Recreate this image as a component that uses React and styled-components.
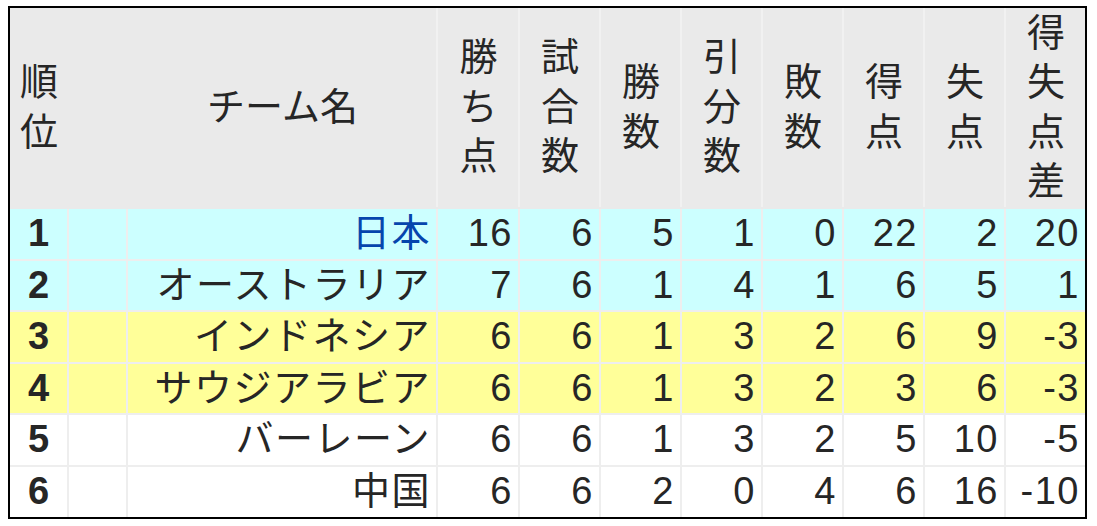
import React from "react";
import styled, { createGlobalStyle } from "styled-components";

const GlobalStyle = createGlobalStyle`
  body {
    margin: 0;
    background: #fff;
    font-family: "Liberation Sans", "Noto Sans CJK JP", sans-serif;
  }
`;

const Page = styled.div`
  padding: 6px 0 0 8px;
`;

// black frame round the whole standings table
const Frame = styled.div`
  width: 1075px;
  border: 2px solid #000;
`;

const Table = styled.table`
  width: 100%;
  table-layout: fixed;
  border-collapse: collapse;
  border-style: hidden;
  font-size: 38px;
  letter-spacing: 1.5px;
  color: #262626;
`;

const HeadCell = styled.th`
  height: 199px;
  padding: 0 0 0 1px;
  font-weight: normal;
  letter-spacing: 0;
  line-height: 49.5px;
  text-align: center;
  vertical-align: middle;
  background: #eaeaea;
  border: 2px solid #f1f1f1;
  border-bottom-color: #eaeaea;
  border-right-color: ${p => (p.$seamless ? "#eaeaea" : "#f1f1f1")};
`;

const Row = styled.tr`
  background: ${p => p.$bg || "#fff"};
`;

const Cell = styled.td`
  height: 49.6px;
  padding: 0 5px 0 0;
  line-height: 49.6px;
  white-space: nowrap;
  text-align: ${p => p.$align || "right"};
  font-weight: ${p => (p.$bold ? "bold" : "normal")};
  color: ${p => p.$color || "inherit"};
  border: 2px solid #eeeeee;
`;

const RankCell = styled(Cell)`
  padding: 0;
  letter-spacing: 0;
`;

const columns = [58, 59, 310, 82, 81, 81, 81, 81, 81, 81, 80];

const headers = [
  ["勝", "ち", "点"],
  ["試", "合", "数"],
  ["勝", "数"],
  ["引", "分", "数"],
  ["敗", "数"],
  ["得", "点"],
  ["失", "点"],
  ["得", "失", "点", "差"],
];

const teams = [
  { rank: 1, name: "日本", link: true, bg: "#ccffff", stats: [16, 6, 5, 1, 0, 22, 2, 20] },
  { rank: 2, name: "オーストラリア", bg: "#ccffff", stats: [7, 6, 1, 4, 1, 6, 5, 1] },
  { rank: 3, name: "インドネシア", bg: "#ffff99", stats: [6, 6, 1, 3, 2, 6, 9, -3] },
  { rank: 4, name: "サウジアラビア", bg: "#ffff99", stats: [6, 6, 1, 3, 2, 3, 6, -3] },
  { rank: 5, name: "バーレーン", stats: [6, 6, 1, 3, 2, 5, 10, -5] },
  { rank: 6, name: "中国", stats: [6, 6, 2, 0, 4, 6, 16, -10] },
];

function Stacked({ chars }) {
  return chars.map((c, i) => (
    <React.Fragment key={i}>
      {i > 0 && <br />}
      {c}
    </React.Fragment>
  ));
}

export default function App() {
  return (
    <Page>
      <GlobalStyle />
      <Frame>
        <Table>
          <colgroup>
            {columns.map((w, i) => (
              <col key={i} style={{ width: w }} />
            ))}
          </colgroup>
          <thead>
            <tr>
              <HeadCell $seamless>
                <Stacked chars={["順", "位"]} />
              </HeadCell>
              <HeadCell $seamless />
              <HeadCell>チーム名</HeadCell>
              {headers.map((h, i) => (
                <HeadCell key={i}>
                  <Stacked chars={h} />
                </HeadCell>
              ))}
            </tr>
          </thead>
          <tbody>
            {teams.map(t => (
              <Row key={t.rank} $bg={t.bg}>
                <RankCell $align="center" $bold>
                  {t.rank}
                </RankCell>
                <Cell />
                <Cell $color={t.link ? "#0645ad" : undefined}>{t.name}</Cell>
                {t.stats.map((s, i) => (
                  <Cell key={i}>{s}</Cell>
                ))}
              </Row>
            ))}
          </tbody>
        </Table>
      </Frame>
    </Page>
  );
}
